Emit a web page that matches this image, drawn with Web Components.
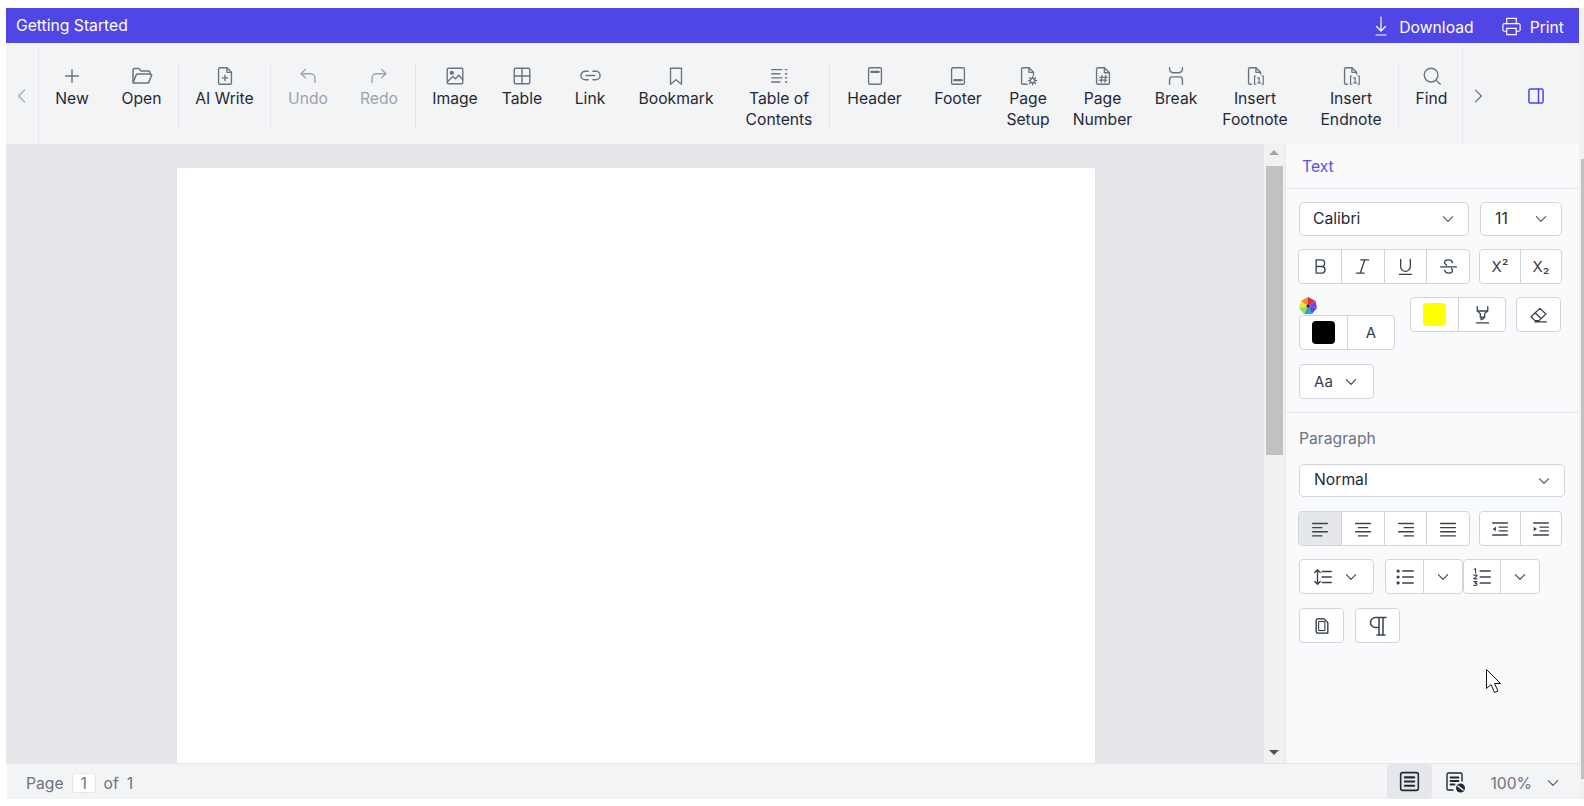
<!DOCTYPE html>
<html lang="en">
<head>
<meta charset="utf-8">
<title>Getting Started</title>
<style>
html, body { height: 100%; }
body { margin: 0; padding: 8px 5px 7px 6px; box-sizing: border-box; background: #fff; overflow: hidden; font-family: Inter, "Liberation Sans", sans-serif; color: #111827; }
</style>
</head>
<body>
<doc-editor></doc-editor>
<script>
// shared icon set, 24 box, stroked with currentColor
const ICONS = {
    plus: '<path d="M12 5v14M5 12h14"/>',
    open: '<path d="M3 18V6a1.5 1.5 0 0 1 1.5-1.5h4.2L11 7h7.5A1.5 1.5 0 0 1 20 8.5V10"/><path d="M3 19h15.5l3-7.5a1 1 0 0 0-1-1.5H7.5a1.5 1.5 0 0 0-1.4 1L3 19z"/>',
    aiwrite: '<path d="M14 3H6.5A1.5 1.5 0 0 0 5 4.5v15A1.5 1.5 0 0 0 6.5 21h11a1.5 1.5 0 0 0 1.5-1.5V8z"/><path d="M14 3v5h5M12 11v6M9 14h6"/>',
    undo: '<path d="M9 5 4.5 9.5 9 14"/><path d="M4.5 9.5H15a4.5 4.5 0 0 1 4.5 4.5v5"/>',
    redo: '<path d="M15 5l4.5 4.5L15 14"/><path d="M19.5 9.5H9A4.5 4.5 0 0 0 4.5 14v5"/>',
    image: '<rect x="3.5" y="3.5" width="17" height="17" rx="1.5"/><circle cx="8.5" cy="8.5" r="1.6" fill="currentColor"/><path d="M4 18l5.5-5.5 3 2.5 3.5-4 4.5 5"/>',
    table: '<rect x="3.5" y="3.5" width="17" height="17" rx="1.5"/><path d="M12 3.5v17M3.5 12h17"/>',
    link: '<path d="M9.5 7.5H6.5a4.5 4.5 0 0 0 0 9h3M14.5 7.5h3a4.5 4.5 0 0 1 0 9h-3M7.5 12h9"/>',
    bookmark: '<path d="M6 3.5h12V21l-6-5-6 5z"/>',
    toc: '<path d="M4 5h11M4 9.5h9M4 14h11M4 18.5h9M19 5h1.5M19 9.5h1.5M19 14h1.5M19 18.5h1.5"/>',
    header: '<rect x="5" y="3" width="14" height="18" rx="1.5"/><path d="M8 7.5h8" stroke-width="2.5"/>',
    footer: '<rect x="5" y="3" width="14" height="18" rx="1.5"/><path d="M8 16.5h8" stroke-width="2.5"/>',
    pagesetup: '<path d="M11 21H6.5A1.5 1.5 0 0 1 5 19.5v-15A1.5 1.5 0 0 1 6.5 3H13l5 5v3"/><path d="M13 3v5h5"/><circle cx="17" cy="17" r="2.5"/><path d="M17 12.5v2M17 19.5v2M12.5 17h2M19.5 17h2M13.8 13.8l1.4 1.4M18.8 18.8l1.4 1.4M13.8 20.2l1.4-1.4M18.8 15.2l1.4-1.4"/>',
    pagenumber: '<path d="M13.5 3h-7A1.5 1.5 0 0 0 5 4.5v15A1.5 1.5 0 0 0 6.5 21h11a1.5 1.5 0 0 0 1.5-1.5V8.5z"/><path d="M13.5 3v5.5H19M11 11.5l-1 7M15 11.5l-1 7M8.5 13.5h8M8 16.5h8"/>',
    pagebreak: '<path d="M5 3v2c0 2 2.5 3.5 4 3.5h6c1.5 0 4-1.5 4-3.5V3M5 21v-5c0-2 1.500-3 3-3h8c1.5 0 3 1 3 3v5"/>',
    footnote: '<path d="M8 21H6.5A1.5 1.5 0 0 1 5 19.5v-15A1.5 1.5 0 0 1 6.5 3H13l5 5v2"/><path d="M13 3v5h5"/><path d="M11.5 12v9M11.5 12H13M11.5 21H13M21 12v9M21 12h-1.5M21 21h-1.5" stroke-width="1.3"/><path d="M15 14.5l1.5-1v6M15 19.5h3" stroke-width="1.3"/>',
    search: '<circle cx="11" cy="11" r="7.5"/><path d="M16.5 16.5 21 21"/>',
    prev: '<path d="M15 5l-7 7 7 7"/>',
    next: '<path d="M9 5l7 7-7 7"/>',
    panel: '<rect x="3.5" y="3.5" width="17" height="17" rx="2"/><path d="M15 3.5v17"/>',
    download: '<path d="M12 3v14M7.5 12.5 12 17l4.5-4.5M7 21h10"/>',
    print: '<path d="M7 9V3.5h10V9"/><path d="M7 17H4.5A1.5 1.5 0 0 1 3 15.5v-5A1.5 1.5 0 0 1 4.5 9h15a1.5 1.5 0 0 1 1.5 1.5v5a1.5 1.5 0 0 1-1.5 1.5H17"/><rect x="7" y="14" width="10" height="6.5"/>',
    chevron: '<path d="M5 8.5l7 7 7-7"/>',
    bold: '<path d="M7 4.5h6a3.7 3.7 0 0 1 0 7.5H7zM7 12h7a3.8 3.8 0 0 1 0 7.5H7z"/>',
    italic: '<path d="M10 4.5h9M5 19.5h9M14.5 4.5l-5 15"/>',
    underline: '<path d="M6.5 4v8a5.5 5.5 0 0 0 11 0V4M5 21h14"/>',
    strike: '<path d="M16.5 7.500C16 5.500 14.500 4.500 12 4.500c-2.800 0-4.500 1.200-4.500 3 0 1.400.9 2.300 2.300 3M7.500 16.500c.5 2 2 3 4.500 3 2.800 0 4.500-1.200 4.500-3 0-1-.4-1.700-1-2.300M3 12.500h18"/>',
    highlight: '<path d="M6 3v5l3.5 3v4h5v-4L18 8V3M6 8h12M10.5 15v3l3-1.5V15M5 21.5h14"/>',
    eraser: '<path d="M8 19 3.5 14.5 13.5 5l7 6.5-8 7.5zM8 10l7 6.5M8 20.5h13"/>',
    alignleft: '<path d="M4 6h16M4 10.5h10M4 15h16M4 19.5h10"/>',
    aligncenter: '<path d="M4 6h16M7 10.5h10M4 15h16M7 19.5h10"/>',
    alignright: '<path d="M4 6h16M10 10.5h10M4 15h16M10 19.5h10"/>',
    justify: '<path d="M4 6h16M4 10.5h16M4 15h16M4 19.5h16"/>',
    outdent: '<path d="M4 5.5h16M11 10h9M11 14h9M4 18.5h16"/><path d="M7.5 9.5v5L4 12z" fill="currentColor" stroke="none"/>',
    indent: '<path d="M4 5.5h16M11 10h9M11 14h9M4 18.5h16"/><path d="M4 9.5v5L7.5 12z" fill="currentColor" stroke="none"/>',
    linespace: '<path d="M11 6h10M11 12h10M11 18h10M6 4v16M3 7l3-3 3 3M3 17l3 3 3-3"/>',
    bullets: '<circle cx="4.5" cy="5.5" r="1" fill="currentColor"/><circle cx="4.5" cy="12" r="1" fill="currentColor"/><circle cx="4.5" cy="18.5" r="1" fill="currentColor"/><path d="M9.5 5.5H21M9.5 12H21M9.5 18.5H21"/>',
    numbers: '<path d="M10 5.5h11M10 12h11M10 18.5h11"/><path d="M3.5 3.5 5 3v4.5M3 10h3.5v.5L3 14h3.5M3 17h3.5L4.5 18.7c1.5 0 2 .4 2 1.300s-1 1.500-3.500 1" stroke-width="1.2"/>',
    pagecopy: '<path d="M7 3.5h7.5L19 8v12.5H7a2 2 0 0 1-2-2v-13a2 2 0 0 1 2-2z"/><rect x="8.5" y="6.5" width="7" height="11" stroke-width="1.2"/>',
    pilcrow: '<path d="M20 3.5H9.5a5 5 0 0 0 0 10H13M13 3.5V21M17 3.5V21M11 21h8"/>',
    printlayout: '<rect x="3.5" y="3.5" width="17" height="17" rx="2"/><path d="M7.5 8h9M7.5 12h9M7.5 16h9" stroke-width="2"/>',
    weblayout: '<path d="M10 20H5.5A1.5 1.5 0 0 1 4 18.500v-14A1.5 1.5 0 0 1 5.500 3h12A1.5 1.5 0 0 1 19 4.500V11"/><path d="M7.5 7.5h8M7.5 11h8M7.5 14.5h4" stroke-width="1.8"/><circle cx="17.5" cy="18" r="4.5" fill="currentColor" stroke="none"/><path d="M15 16l5 4" stroke="#f3f4f6" stroke-width="1.6"/>'
};

function icon(name, size, strokeWidth) {
    return `<svg width="${size}" height="${size}" viewBox="0 0 24 24" fill="none" stroke="currentColor" stroke-width="${strokeWidth || 1.5}" stroke-linecap="round" stroke-linejoin="round" aria-hidden="true">${ICONS[name]}</svg>`;
}

class TitleBar extends HTMLElement {
    constructor() {
        super();
        this.attachShadow({ mode: 'open' });
        this.shadowRoot.innerHTML = `
            <style>
                :host { display: flex; align-items: center; justify-content: space-between; height: 35px; background: #4f46e5; color: #fff; font-size: 15.7px; padding: 0 15px 0 10px; flex: none; }
                .actions { display: flex; align-items: center; gap: 26px; padding-top: 3px; }
                .action { display: flex; align-items: center; gap: 6px; }
                .action + .action { gap: 7px; }
                svg { display: block; margin-top: -2px; }
            </style>
            <span>Getting Started</span>
            <div class="actions">
                <span class="action">${icon('download', 24, 1.2)}Download</span>
                <span class="action">${icon('print', 23, 1.2)}Print</span>
            </div>
        `;
    }
}

class RibbonItem extends HTMLElement {
    constructor() {
        super();
        this.attachShadow({ mode: 'open' });
    }

    connectedCallback() {
        const disabled = this.hasAttribute('disabled');
        const width = this.getAttribute('w');
        const size = this.getAttribute('size') || 22;
        this.shadowRoot.innerHTML = `
            <style>
                :host { display: flex; flex-direction: column; align-items: center; flex: none; width: ${width}px; font-size: 15.7px; line-height: 21px; text-align: center; color: ${disabled ? '#9ca3af' : '#1f2937'}; padding-top: 22px; box-sizing: border-box; }
                .icon { color: ${disabled ? '#9ca3af' : '#6b7280'}; height: 21px; margin-bottom: 2px; display: flex; align-items: center; justify-content: center; }
                svg { display: block; flex: none; }
            </style>
            <span class="icon">${icon(this.getAttribute('icon'), size)}</span>
            <slot></slot>
        `;
    }
}

class RibbonSep extends HTMLElement {
    constructor() {
        super();
        this.attachShadow({ mode: 'open' });
        this.shadowRoot.innerHTML = `<style>:host { display: block; flex: none; width: 1px; height: 66px; margin-top: 20px; background: #e5e7eb; }</style>`;
    }
}

class RibbonBar extends HTMLElement {
    constructor() {
        super();
        this.attachShadow({ mode: 'open' });
        this.shadowRoot.innerHTML = `
            <style>
                :host { display: flex; height: 101px; background: #f3f4f6; flex: none; color: #6b7280; }
                .nav { flex: none; display: flex; align-items: center; justify-content: center; margin-top: 5px; height: 96px; box-sizing: border-box; }
                .prev { width: 33px; border-right: 1px solid #e5e7eb; color: #9ca3af; }
                .next { width: 31px; border-left: 1px solid #e5e7eb; }
                .toggle { flex: none; display: flex; align-items: center; justify-content: center; width: 86px; margin-top: 5px; height: 96px; color: #4f46e5; }
                svg { display: block; }
            </style>
            <span class="nav prev">${icon('prev', 20)}</span>
            <slot></slot>
            <span class="nav next">${icon('next', 20)}</span>
            <span class="toggle">${icon('panel', 20, 1.8)}</span>
        `;
    }
}

// white bordered control, used for selects and button groups
class ToolGroup extends HTMLElement {
    constructor() {
        super();
        this.attachShadow({ mode: 'open' });
        this.shadowRoot.innerHTML = `
            <style>
                :host { display: inline-flex; flex: none; height: 35px; box-sizing: border-box; background: #fff; border: 1px solid #d1d5db; border-radius: 4px; overflow: hidden; }
                ::slotted(*) { border-left: 1px solid #d1d5db; }
                ::slotted(:first-child) { border-left: 0; }
            </style>
            <slot></slot>
        `;
    }
}

class ToolBtn extends HTMLElement {
    constructor() {
        super();
        this.attachShadow({ mode: 'open' });
    }

    connectedCallback() {
        const name = this.getAttribute('icon');
        const size = this.getAttribute('size') || 21;
        this.shadowRoot.innerHTML = `
            <style>
                :host { display: flex; align-items: center; justify-content: center; flex: 1 1 0; box-sizing: border-box; min-width: 0; color: #374151; font-size: 15px; }
                :host([active]) { background: #e5e7eb; }
                svg { display: block; }
            </style>
            ${name ? icon(name, size, this.getAttribute('sw') || 1.5) : ''}<slot></slot>
        `;
    }
}

class SelectBox extends HTMLElement {
    constructor() {
        super();
        this.attachShadow({ mode: 'open' });
        this.shadowRoot.innerHTML = `
            <style>
                :host { display: flex; align-items: center; justify-content: space-between; box-sizing: border-box; height: 34px; background: #fff; border: 1px solid #d1d5db; border-radius: 5px; padding: 0 12px 2px 14px; font-size: 15.7px; color: #1f2937; flex: none; }
                .chev { color: #4b5563; display: block; margin-top: 2px; }
                svg { display: block; }
            </style>
            <slot></slot>
            <span class="chev">${icon('chevron', 16, 1.6)}</span>
        `;
    }
}

class DocScrollbar extends HTMLElement {
    constructor() {
        super();
        this.attachShadow({ mode: 'open' });
        this.shadowRoot.innerHTML = `
            <style>
                :host { display: flex; flex-direction: column; align-items: flex-start; flex: none; width: 21px; background: #f1f1f1; padding-left: 2px; box-sizing: border-box; }
                .up, .down { width: 0; height: 0; border-left: 5px solid transparent; border-right: 5px solid transparent; flex: none; margin-left: 3px; }
                .up { border-bottom: 5px solid #a3a3a3; margin-top: 6px; margin-bottom: 11px; }
                .thumb { width: 17px; height: 289px; background: #c1c1c1; flex: none; }
                .down { border-top: 5px solid #505050; margin-top: auto; margin-bottom: 8px; }
            </style>
            <div class="up"></div>
            <div class="thumb"></div>
            <div class="down"></div>
        `;
    }
}

class DocCanvas extends HTMLElement {
    constructor() {
        super();
        this.attachShadow({ mode: 'open' });
        this.shadowRoot.innerHTML = `
            <style>
                :host { display: block; flex: 1 1 0; min-width: 0; background: #e5e7eb; overflow: hidden; padding: 24px 0 0 170px; box-sizing: border-box; border-left: 1px solid #e5e7eb; }
                .page { width: 918px; height: 1188px; background: #fff; box-shadow: 0 0 1px #d1d5db; }
            </style>
            <div class="page"></div>
        `;
    }
}

class SwatchBox extends HTMLElement {
    constructor() {
        super();
        this.attachShadow({ mode: 'open' });
    }

    connectedCallback() {
        this.shadowRoot.innerHTML = `<style>:host { display: block; width: 23px; height: 23px; border-radius: 4px; background: ${this.getAttribute('color')}; }</style>`;
    }
}

class SidePanel extends HTMLElement {
    constructor() {
        super();
        this.attachShadow({ mode: 'open' });
        this.shadowRoot.innerHTML = `
            <style>
                :host { display: flex; flex-direction: column; flex: none; width: 294px; box-sizing: border-box; background: #f9fafb; border-left: 1px solid #e5e7eb; font-size: 15.7px; }
                .tab { height: 45px; line-height: 46px; padding-left: 16px; color: #5850ec; border-bottom: 1px solid #e5e7eb; flex: none; box-sizing: border-box; }
                .section { padding: 13px 16px 13px 12px; border-bottom: 1px solid #e5e7eb; display: flex; flex-direction: column; flex: none; }
                .section.last { border-bottom: 0; padding-top: 16px; }
                .row { display: flex; gap: 9px; align-items: flex-start; }
                .title { color: #6b7280; line-height: 20px; margin-bottom: 15px; padding-left: 1px; }
                .palette { display: block; width: 18px; height: 18px; }
                .first { flex: 0 0 42px; }
            </style>
            <div class="tab">Text</div>
            <div class="section">
                <div class="row" style="margin-bottom:13px;padding-left:1px;gap:11px">
                    <select-box style="width:170px;padding-left:13px">Calibri</select-box>
                    <select-box style="width:82px">11</select-box>
                </div>
                <div class="row" style="margin-bottom:13px">
                    <tool-group style="width:172px">
                        <tool-btn class="first" icon="bold"></tool-btn><tool-btn icon="italic"></tool-btn><tool-btn icon="underline"></tool-btn><tool-btn icon="strike"></tool-btn>
                    </tool-group>
                    <tool-group style="width:83px">
                        <tool-btn>X²</tool-btn><tool-btn>X₂</tool-btn>
                    </tool-group>
                </div>
                <div class="row" style="gap:15px;padding-left:1px;margin-bottom:14px">
                    <div style="width:96px;flex:none">
                        <svg class="palette" viewBox="0 0 18 18">
                            <path d="M9 9 9 0 16.5 4z" fill="#e0312d"/><path d="M9 9 16.5 4 18 11z" fill="#7c3fe0"/><path d="M9 9 18 11 13 17z" fill="#4a57d8"/><path d="M9 9 13 17 5 17z" fill="#2f9fd0"/><path d="M9 9 5 17 0 11z" fill="#8fe05a"/><path d="M9 9 0 11 2 4z" fill="#f2e23a"/><path d="M9 9 2 4 9 0z" fill="#f28a2e"/><circle cx="9" cy="9" r="1.5" fill="#222"/>
                        </svg>
                        <tool-group style="width:96px">
                            <tool-btn style="flex:0 0 47px"><swatch-box color="#000"></swatch-box></tool-btn><tool-btn>A</tool-btn>
                        </tool-group>
                    </div>
                    <tool-group style="width:96px">
                        <tool-btn style="flex:0 0 47px"><swatch-box color="#ff0"></swatch-box></tool-btn><tool-btn icon="highlight"></tool-btn>
                    </tool-group>
                    <tool-group style="width:45px;margin-left:-5px">
                        <tool-btn icon="eraser"></tool-btn>
                    </tool-group>
                </div>
                <div class="row" style="padding-left:1px">
                    <tool-group style="width:75px"><tool-btn style="gap:10px">Aa ${icon('chevron', 16, 1.6)}</tool-btn></tool-group>
                </div>
            </div>
            <div class="section last">
                <div class="title">Paragraph</div>
                <div class="row" style="margin-bottom:14px;padding-left:1px">
                    <select-box style="width:266px;height:33px">Normal</select-box>
                </div>
                <div class="row" style="margin-bottom:13px">
                    <tool-group style="width:172px">
                        <tool-btn class="first" icon="alignleft" size="22" active></tool-btn><tool-btn icon="aligncenter" size="22"></tool-btn><tool-btn icon="alignright" size="22"></tool-btn><tool-btn icon="justify" size="22"></tool-btn>
                    </tool-group>
                    <tool-group style="width:83px">
                        <tool-btn icon="outdent" size="22"></tool-btn><tool-btn icon="indent" size="22"></tool-btn>
                    </tool-group>
                </div>
                <div class="row" style="margin-bottom:14px;padding-left:1px;gap:11px">
                    <tool-group style="width:75px"><tool-btn style="gap:9px;padding-right:2px">${icon('linespace', 22, 1.5)}${icon('chevron', 16, 1.6)}</tool-btn></tool-group>
                    <div style="display:flex">
                        <tool-group style="width:78px"><tool-btn icon="bullets" size="22" style="flex:0 0 37px"></tool-btn><tool-btn icon="chevron" size="16" sw="1.6"></tool-btn></tool-group>
                        <tool-group style="width:77px"><tool-btn icon="numbers" size="22" style="flex:0 0 36px"></tool-btn><tool-btn icon="chevron" size="16" sw="1.6"></tool-btn></tool-group>
                    </div>
                </div>
                <div class="row" style="padding-left:1px;gap:11px">
                    <tool-group style="width:45px"><tool-btn icon="pagecopy" size="20" style="color:#1f2937"></tool-btn></tool-group>
                    <tool-group style="width:45px"><tool-btn icon="pilcrow" size="24"></tool-btn></tool-group>
                </div>
            </div>
        `;
    }
}

class StatusBar extends HTMLElement {
    constructor() {
        super();
        this.attachShadow({ mode: 'open' });
        this.shadowRoot.innerHTML = `
            <style>
                :host { display: flex; align-items: center; flex: none; height: 36px; box-sizing: border-box; background: #f3f4f6; border-top: 1px solid #e5e7eb; margin-left: 1px; padding: 3px 0 0 19px; color: #6b7280; font-size: 15.7px; }
                .num { display: inline-block; width: 24px; height: 20px; line-height: 20px; box-sizing: border-box; text-align: center; background: #fff; border: 1px solid #e5e7eb; border-radius: 3px; margin: 0 8px 0 8px; }
                .of { margin-right: 8px; }
                .right { margin-left: auto; margin-top: -3px; display: flex; align-items: center; align-self: stretch; }
                .view { display: flex; align-items: center; justify-content: center; width: 45px; align-self: stretch; color: #1f2937; border-radius: 4px; }
                .view.active { background: #e5e7eb; }
                .zoom { display: flex; align-items: center; gap: 13px; margin: 3px 18px 0 13px; }
                .zoom svg { color: #4b5563; }
                svg { display: block; }
            </style>
            <span>Page</span><span class="num">1</span><span class="of">of</span><span>1</span>
            <div class="right">
                <span class="view active">${icon('printlayout', 25, 1.5)}</span>
                <span class="view">${icon('weblayout', 24, 1.4)}</span>
                <span class="zoom">100%${icon('chevron', 16, 1.6)}</span>
            </div>
        `;
    }
}

class DocEditor extends HTMLElement {
    constructor() {
        super();
        this.attachShadow({ mode: 'open' });
        this.shadowRoot.innerHTML = `
            <style>
                :host { display: flex; flex-direction: column; height: 791px; position: relative; }
                .main { display: flex; flex: 1 1 0; min-height: 0; }
                .cursor { position: absolute; left: 1480px; top: 661px; }
                .win-track { position: absolute; left: 1573px; top: 0; width: 5px; height: 791px; background: #f1f1f1; }
                .win-thumb { position: absolute; left: 2px; top: 151px; width: 3px; height: 620px; background: #c1c1c1; }
            </style>
            <title-bar></title-bar>
            <ribbon-bar>
                <ribbon-item w="66" icon="plus">New</ribbon-item>
                <ribbon-item w="73" icon="open" size="24">Open</ribbon-item>
                <ribbon-sep></ribbon-sep>
                <ribbon-item w="91" icon="aiwrite">AI Write</ribbon-item>
                <ribbon-sep></ribbon-sep>
                <ribbon-item w="72" icon="undo" disabled style="padding-left:2px">Undo</ribbon-item>
                <ribbon-item w="72" icon="redo" disabled>Redo</ribbon-item>
                <ribbon-sep></ribbon-sep>
                <ribbon-item w="76" icon="image" style="padding-left:2px">Image</ribbon-item>
                <ribbon-item w="60" icon="table">Table</ribbon-item>
                <ribbon-item w="76" icon="link" size="23">Link</ribbon-item>
                <ribbon-item w="96" icon="bookmark">Bookmark</ribbon-item>
                <ribbon-item w="105" icon="toc" style="padding-left:5px">Table of Contents</ribbon-item>
                <ribbon-sep></ribbon-sep>
                <ribbon-item w="89" icon="header">Header</ribbon-item>
                <ribbon-item w="78" icon="footer">Footer</ribbon-item>
                <ribbon-item w="62" icon="pagesetup">Page Setup</ribbon-item>
                <ribbon-item w="87" icon="pagenumber">Page Number</ribbon-item>
                <ribbon-item w="60" icon="pagebreak">Break</ribbon-item>
                <ribbon-item w="98" icon="footnote">Insert Footnote</ribbon-item>
                <ribbon-item w="94" icon="footnote">Insert Endnote</ribbon-item>
                <ribbon-sep></ribbon-sep>
                <ribbon-item w="63" icon="search" style="padding-left:2px">Find</ribbon-item>
            </ribbon-bar>
            <div class="main">
                <doc-canvas></doc-canvas>
                <doc-scrollbar></doc-scrollbar>
                <side-panel></side-panel>
            </div>
            <status-bar></status-bar>
            <div class="win-track"><div class="win-thumb"></div></div>
            <svg class="cursor" width="16" height="26" viewBox="0 0 16 26"><path d="M.5.5v19l4.5-4 3.5 8 3.5-1.5-3.5-7.5h6z" fill="#fff" stroke="#111" stroke-width="1"/></svg>
        `;
    }
}

customElements.define('title-bar', TitleBar);
customElements.define('ribbon-item', RibbonItem);
customElements.define('ribbon-sep', RibbonSep);
customElements.define('ribbon-bar', RibbonBar);
customElements.define('tool-group', ToolGroup);
customElements.define('tool-btn', ToolBtn);
customElements.define('select-box', SelectBox);
customElements.define('swatch-box', SwatchBox);
customElements.define('doc-scrollbar', DocScrollbar);
customElements.define('doc-canvas', DocCanvas);
customElements.define('side-panel', SidePanel);
customElements.define('status-bar', StatusBar);
customElements.define('doc-editor', DocEditor);
</script>
</body>
</html>
